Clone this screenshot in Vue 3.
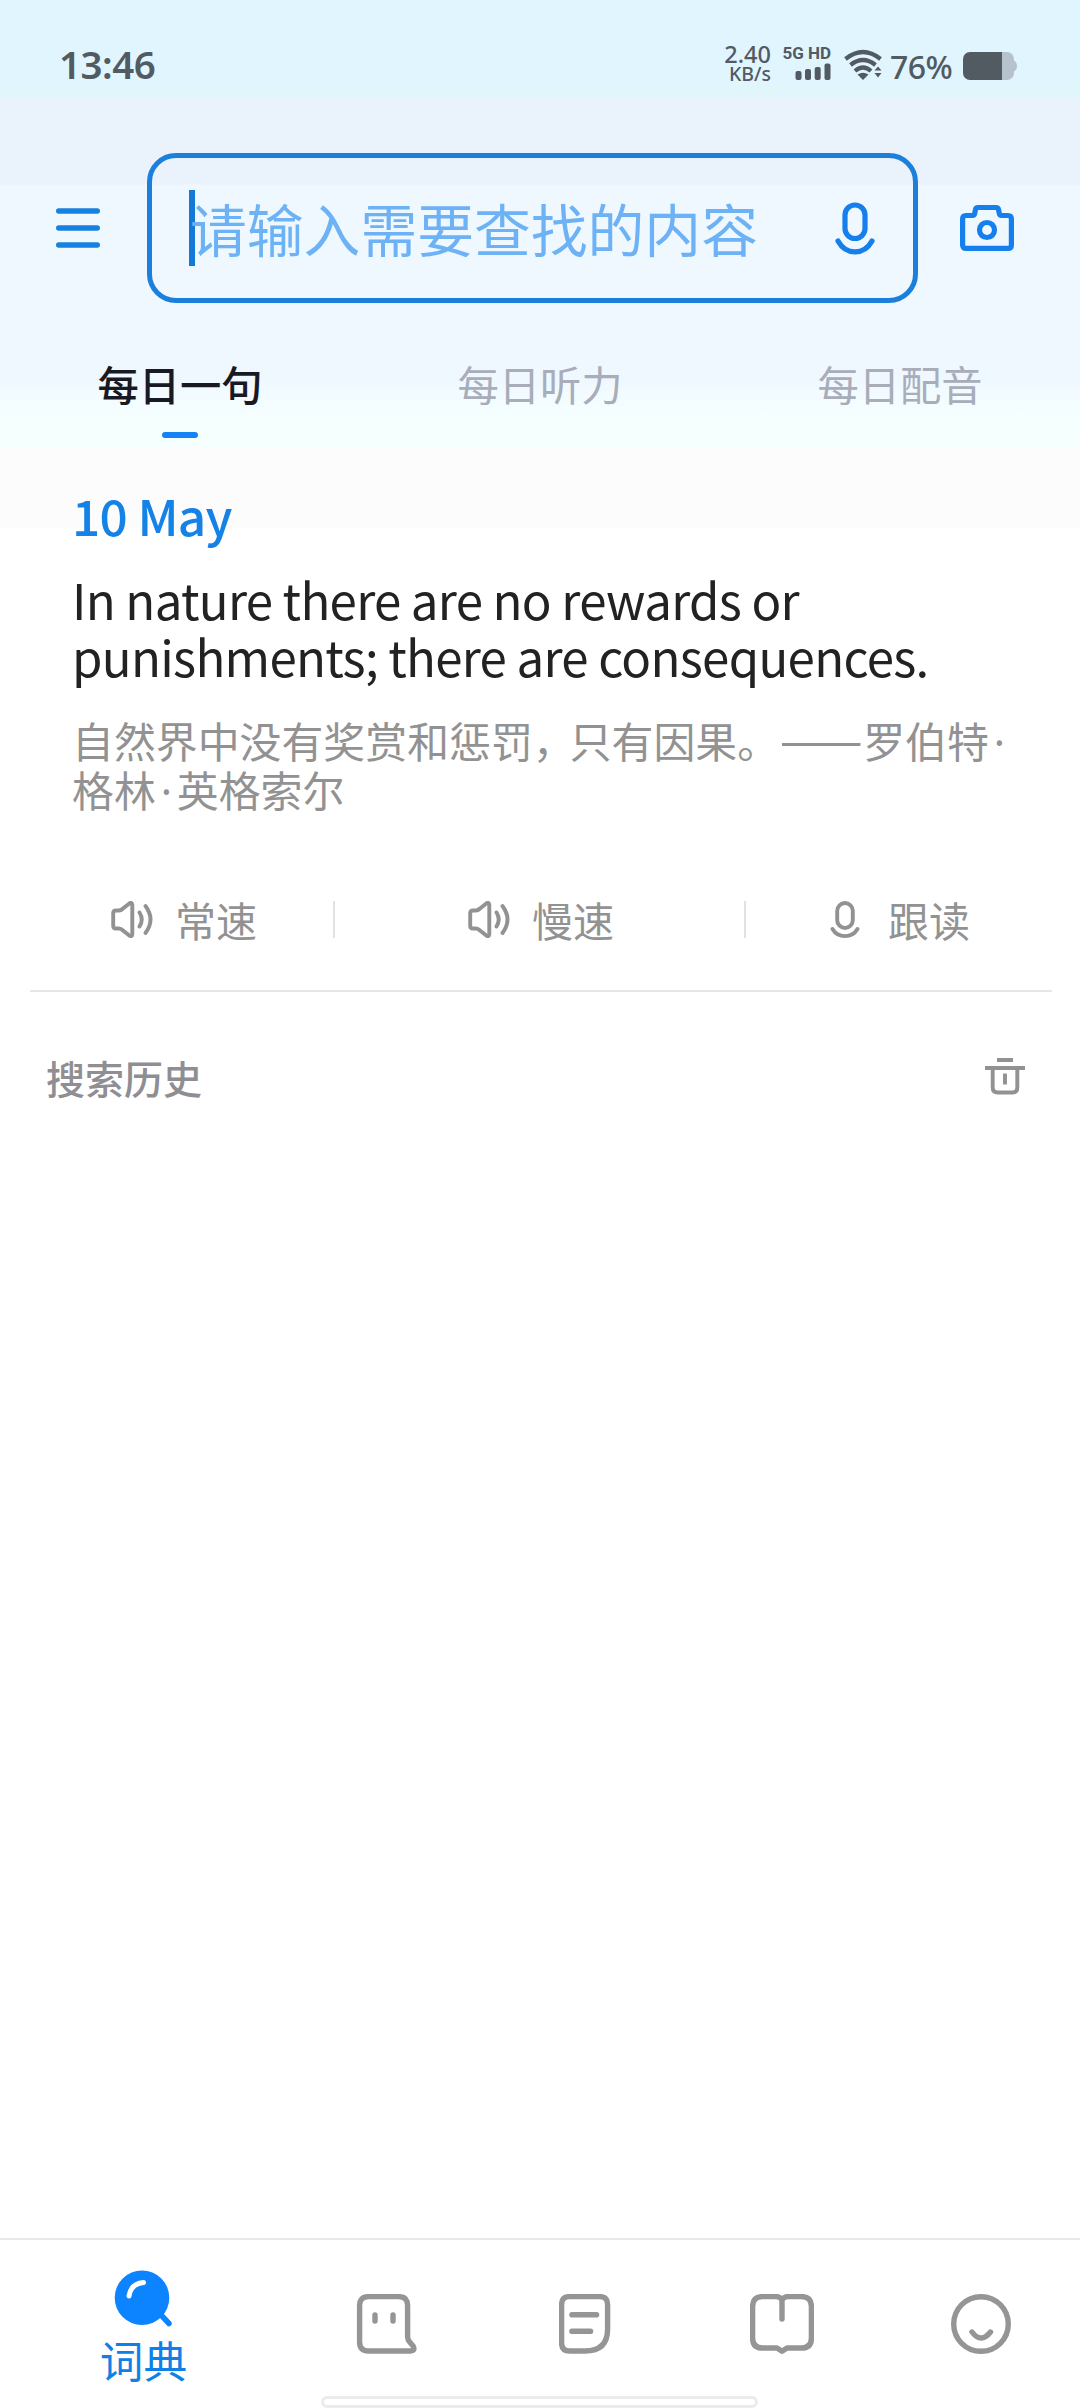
<script setup>
import { ref } from 'vue'

const tabs = ['每日一句', '每日听力', '每日配音']
const activeTab = ref(0)
const query = ref('')
</script>

<template>
  <div class="screen">
    <header class="status">
      <span class="time">13:46</span>
      <div class="net"><span class="rate">2.40</span><span class="unit">KB/s</span></div>
      <div class="cell">
        <span class="gen">5G HD</span>
        <svg class="bars" width="36" height="17" viewBox="0 0 36 17" fill="#525a62">
          <rect x="0.5" y="8" width="6" height="9" rx="2" />
          <rect x="10" y="6" width="6" height="11" rx="2" />
          <rect x="19.7" y="4" width="6" height="13" rx="2" />
          <rect x="29.5" y="0.5" width="6" height="16.500" rx="2" />
        </svg>
      </div>
      <svg class="wifi" width="38" height="32" viewBox="0 0 38 32" fill="none" stroke="#525a62" stroke-width="4.200">
        <path d="M1.500 10Q19 -4 36.500 10" />
        <path d="M6.500 16Q19 6 31.500 16" />
        <path d="M11 22Q19 15 27 22" />
        <path d="M13.500 25.500Q19 22 24.500 25.500L19 31Z" fill="#525a62" stroke="none" />
        <path d="M30.500 21.500L34 17.500L37.500 21.500ZM30.500 24L34 28.500L37.500 24Z" fill="#525a62" stroke="none" />
      </svg>
      <span class="pct">76%</span>
      <svg class="battery" width="55" height="28" viewBox="0 0 55 28">
        <path d="M39 0h5a7 7 0 0 1 7 7v1.500q3 1.500 3 5.500t-3 5.500V21a7 7 0 0 1-7 7h-5z" fill="#b7c3cc" />
        <path d="M7 0h32v28H7a7 7 0 0 1-7-7V7a7 7 0 0 1 7-7z" fill="#525a62" />
      </svg>
    </header>

    <div class="searchrow">
      <svg class="menu" width="44" height="40" viewBox="0 0 44 40" stroke="#1681e0" stroke-width="5.600" stroke-linecap="round">
        <path d="M2.800 3h38.400M2.800 20h38.400M2.800 37h38.400" />
      </svg>
      <div class="box">
        <span class="caret"></span>
        <span class="placeholder">{{ query || '请输入需要查找的内容' }}</span>
        <svg class="mic" width="42" height="54" viewBox="0 0 42 54" fill="none" stroke="#157fed" stroke-width="5.200" stroke-linecap="round">
          <rect x="11" y="4" width="20" height="33.500" rx="10" />
          <path d="M4 40C12 54.500 30 54.500 38 40" />
        </svg>
      </div>
      <svg class="camera" width="54" height="48" viewBox="0 0 54 48" fill="none" stroke="#157fed" stroke-width="5.200" stroke-linejoin="round">
        <path d="M6 11.500h6.500q1.800 0 2.200-2l.8-4q.4-2 2.400-2h18.200q2 0 2.400 2l.8 4q.4 2 2.200 2H48q3.400 0 3.400 3.400V41q0 3.400-3.400 3.400H6Q2.600 44.400 2.600 41V14.900Q2.600 11.500 6 11.500Z" />
        <circle cx="27" cy="26" r="7.500" />
      </svg>
    </div>

    <nav class="tabs">
      <div v-for="(tab, i) in tabs" :key="tab" class="tab" :class="{ active: i === activeTab }" @click="activeTab = i">
        <span>{{ tab }}</span>
        <i class="mark"></i>
      </div>
    </nav>

    <section class="daily">
      <div class="date">10 May</div>
      <div class="sentence">In nature there are no rewards or<br />punishments; there are consequences.</div>
      <div class="trans">自然界中没有奖赏和惩罚<span class="comma">，</span>只有因果。<span class="dash">——</span>罗伯特<span class="dot">·</span><br />格林<span class="dot">·</span>英格索尔</div>
    </section>

    <section class="actions">
      <div v-for="(label, i) in ['常速', '慢速', '跟读']" :key="label" class="action" :class="'a' + i">
        <svg v-if="i < 2" width="43" height="37" viewBox="0 0 43 37" fill="none" stroke="#929292" stroke-width="3.900" stroke-linecap="round" stroke-linejoin="round">
          <path d="M5 9.500H8q2 0 4-2l6-4.800q3-2 3.300 1v29.600q-.3 3-3.300 1L12 29.500q-2-2-4-2H5q-2.800 0-2.800-2.800V12.300Q2.200 9.500 5 9.500Z" />
          <path d="M28.500 11.500q4.500 7 0 14M34.500 5q10 13.500 0 27" />
        </svg>
        <svg v-else width="30" height="38" viewBox="0 0 30 38" fill="none" stroke="#929292" stroke-width="3.900" stroke-linecap="round">
          <rect x="7.200" y="2" width="15.600" height="25" rx="7.800" />
          <path d="M2.500 28C8 37.500 22 37.500 27.500 28" />
        </svg>
        <span>{{ label }}</span>
      </div>
    </section>

    <section class="history">
      <span>搜索历史</span>
      <svg width="40" height="37" viewBox="0 0 40 37" fill="none" stroke="#929292" stroke-width="3.900">
        <path d="M12 2h16M0 10h40M7.700 11v18.500q0 5 5 5h14.600q5 0 5-5V11M20 15.500v11" />
      </svg>
    </section>

    <footer class="nav">
      <div class="item n0">
        <svg width="60" height="60" viewBox="0 0 60 60" fill="none" stroke-linecap="round">
          <circle cx="30" cy="29.700" r="27.300" fill="#0c84ff" />
          <path d="M49 47L57 55.500" stroke="#0c84ff" stroke-width="5.500" />
          <path d="M17 28q2-12.500 14.500-13.500" stroke="#fff" stroke-width="5" />
        </svg>
        <span>词典</span>
      </div>
      <div class="item n1">
        <svg width="62" height="60" viewBox="0 0 62 60" fill="none" stroke="#959595" stroke-width="5.400" stroke-linejoin="round" stroke-linecap="round">
          <path d="M12.600 2.600h30q9 0 9 9V43q0 3 2.500 5.500l3 3.500q2.500 4.800-2.500 5h-42q-9 0-9-9V11.600q0-9 9-9Z" />
          <path d="M19 21v6M37 21v6" />
        </svg>
      </div>
      <div class="item n2">
        <svg width="52" height="60" viewBox="0 0 52 60" fill="none" stroke="#959595" stroke-width="5.400" stroke-linecap="round">
          <path d="M10.600 2.600h30q8 0 8 8V35q0 22-22.500 22H10.600q-8 0-8-8V10.600q0-8 8-8Z" />
          <path d="M13 20.700h24.500M13 37.300h18.500" stroke-width="5.600" />
        </svg>
      </div>
      <div class="item n3">
        <svg width="64" height="60" viewBox="0 0 64 60" fill="none" stroke="#959595" stroke-width="5.400" stroke-linecap="round" stroke-linejoin="round">
          <path d="M32 25V6q-2-3.400-6-3.400H12.600q-10 0-10 10V44q0 10 10 10H27l5 3.200L37 54h14.400q10 0 10-10V12.600q0-10-10-10H38Q34 2.600 32 6" />
        </svg>
      </div>
      <div class="item n4">
        <svg width="60" height="60" viewBox="0 0 60 60" fill="none" stroke="#959595" stroke-width="5.400" stroke-linecap="round">
          <circle cx="30" cy="30" r="27.300" />
          <path d="M21 38q9 12 18.500 0" />
        </svg>
      </div>
      <i class="home"></i>
    </footer>
  </div>
</template>

<style>
body {
  margin: 0;
  background: #fff;
}
</style>

<style scoped>
.screen {
  width: 1080px;
  height: 2408px;
  display: flex;
  flex-direction: column;
  overflow: hidden;
  font-family: "Noto Sans CJK SC", "Noto Sans", sans-serif;
  background: linear-gradient(#e1f5ff 0 84px, #e1f6fb 86px 97px, #eaf2fb 98px 184px, #eff7ff 185px 375px, #f5ffff 415px, #f6fffd 447px, #fcfcfc 448px 528px, #fff 529px);
}
svg {
  display: block;
  flex: none;
}
.status {
  height: 153px;
  display: flex;
  align-items: flex-start;
  color: #525a62;
  line-height: 1;
  white-space: nowrap;
}
.time {
  margin: 44px 0 0 59px;
  width: 661px;
  font: 600 38.500px/40px "Noto Sans", sans-serif;
  letter-spacing: -0.5px;
}
.net {
  width: 51px;
  margin-top: 44px;
  display: flex;
  flex-direction: column;
  align-items: flex-end;
  font-family: "Noto Sans", sans-serif;
  font-weight: 500;
}
.rate {
  font-size: 23.500px;
  line-height: 21px;
}
.unit {
  font-size: 19.500px;
  line-height: 17px;
}
.cell {
  width: 47px;
  margin: 46px 0 0 13px;
  display: flex;
  flex-direction: column;
  align-items: flex-end;
}
.gen {
  font: 700 17px/15px Roboto, sans-serif;
}
.bars {
  margin-top: 2px;
}
.wifi {
  margin: 49px 0 0 13px;
}
.pct {
  width: 64px;
  margin: 50px 0 0 8px;
  font: 500 32px/34px "Noto Sans", sans-serif;
  letter-spacing: -0.6px;
}
.battery {
  margin: 52px 0 0 9px;
}
.searchrow {
  height: 150px;
  display: flex;
  align-items: center;
}
.menu {
  margin-left: 56px;
}
.box {
  box-sizing: border-box;
  width: 771px;
  height: 150px;
  margin: 0 42px 0 47px;
  border: 5px solid #1a80dc;
  border-radius: 29px;
  display: flex;
  align-items: center;
  padding: 0 37px 0 37px;
}
.caret {
  width: 6px;
  height: 76px;
  background: #1478d8;
}
.placeholder {
  flex: 1;
  margin: -3px 0 0 -5px;
  font-size: 56.800px;
  line-height: 76px;
  white-space: nowrap;
  color: #6db2f5;
}
.tabs {
  height: 160px;
  display: flex;
}
.tab {
  width: 360px;
  display: flex;
  flex-direction: column;
  align-items: center;
  padding-top: 50px;
  font-size: 41.300px;
  line-height: 60px;
  color: #a8adb9;
}
.active {
  color: #191923;
  font-weight: 500;
}
.mark {
  width: 36px;
  height: 6px;
  margin-top: 19px;
  border-radius: 3px;
}
.active .mark {
  background: #1583f5;
}
.daily {
  height: 400px;
  padding-left: 72px;
  white-space: nowrap;
}
.date {
  padding-top: 22px;
  font-size: 49.500px;
  line-height: 60px;
  height: 60px;
  font-weight: 500;
  letter-spacing: -0.7px;
  color: #1582e8;
}
.sentence {
  margin-top: 26px;
  font-size: 49.200px;
  line-height: 56.700px;
  letter-spacing: -0.700px;
  color: #222;
}
.trans {
  margin-top: 31px;
  font-size: 41.900px;
  line-height: 49px;
  color: #929292;
}
.comma {
  margin-right: -5px;
}
.dash {
  display: inline-block;
  width: 84px;
  font-size: 49.500px;
  line-height: 40px;
  text-align: center;
}
.dot {
  display: inline-block;
  width: 21px;
  line-height: 40px;
  font-family: "Noto Sans", sans-serif;
  text-align: center;
}
.actions {
  height: 127px;
  margin: 0 28px 0 30px;
  border-bottom: 2px solid #e6e6e6;
  display: flex;
}
.action {
  height: 37px;
  margin-top: 38px;
  display: flex;
  align-items: center;
  box-sizing: border-box;
  font-size: 41px;
  line-height: 37px;
  color: #929292;
  gap: 21px;
}
.action span {
  margin-top: -1px;
}
.a0 {
  width: 305px;
  padding-left: 81px;
  border-right: 2px solid #e2e2e2;
}
.a1 {
  width: 411px;
  padding-left: 133px;
  border-right: 2px solid #e2e2e2;
}
.a2 {
  padding-left: 84px;
  gap: 28px;
}
.history {
  height: 169px;
  box-sizing: border-box;
  padding: 0 55px 0 46px;
  display: flex;
  align-items: center;
  justify-content: space-between;
  font-size: 39px;
  color: #8e8e93;
  font-weight: 500;
}
.nav {
  position: relative;
  height: 168px;
  margin-top: auto;
  border-top: 2px solid #e8e8e8;
  display: flex;
  align-items: flex-start;
}
.item {
  display: flex;
  flex-direction: column;
  align-items: center;
  box-sizing: border-box;
  padding-top: 54px;
}
.n0 {
  width: 284px;
  padding-top: 28px;
  font-size: 43.700px;
  line-height: 60px;
  color: #1180e6;
}
.n0 span {
  margin: 1px 0 0 3px;
}
.n1 {
  width: 206px;
}
.n2 {
  width: 190px;
}
.n3 {
  width: 203px;
}
.n4 {
  width: 196px;
}
.home {
  position: absolute;
  left: 321px;
  bottom: 0;
  width: 437px;
  height: 12px;
  box-sizing: border-box;
  border: 3px solid #ebebeb;
  border-radius: 6px;
  background: #fff;
}
</style>
